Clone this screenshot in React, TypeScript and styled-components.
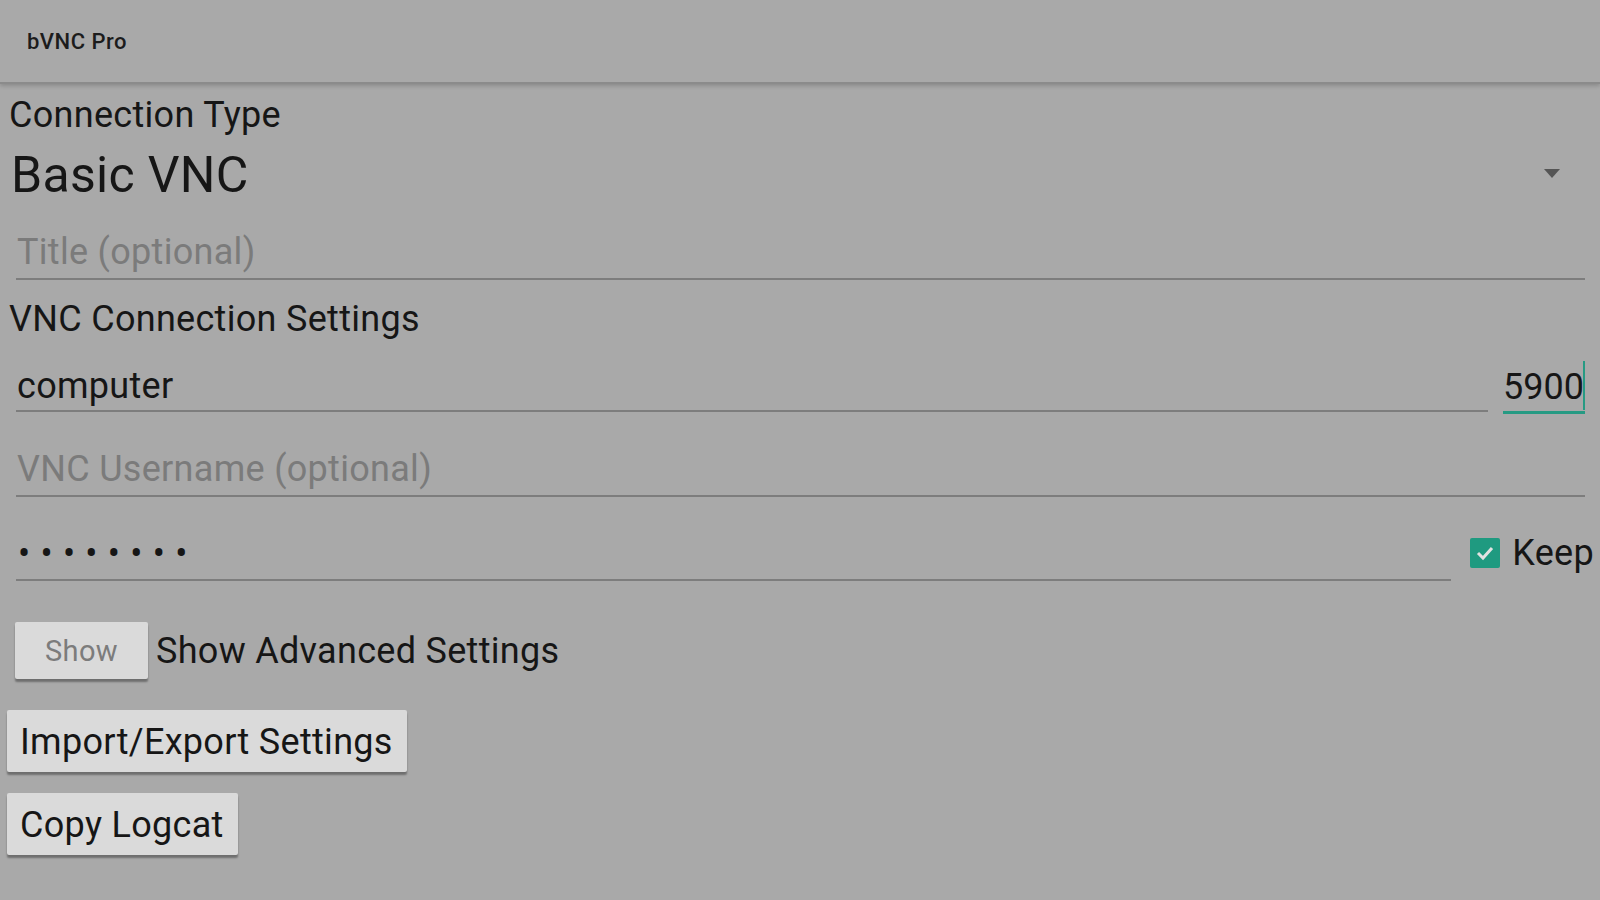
import styled, { createGlobalStyle } from "styled-components";

const GlobalStyle = createGlobalStyle`
  html, body {
    margin: 0;
    padding: 0;
    background: #a9a9a9;
  }
  body {
    font-family: Roboto, "Liberation Sans", sans-serif;
    color: #161616;
  }
`;

export default function App() {
  return (
    <>
      <GlobalStyle />
      <Page>
        <AppBar>
          <AppTitle>bVNC Pro</AppTitle>
        </AppBar>
        <Form>
          <SectionLabel $mt={10}>Connection Type</SectionLabel>
          <Spinner>
            <SpinnerValue>Basic VNC</SpinnerValue>
            <SpinnerArrow width="16" height="9" viewBox="0 0 16 9">
              <polygon points="0,0 16,0 8,9" fill="#555" />
            </SpinnerArrow>
          </Spinner>

          <FieldRow $mt={28}>
            <TextField $hint>Title (optional)</TextField>
          </FieldRow>

          <SectionLabel $mt={18}>VNC Connection Settings</SectionLabel>

          <FieldRow $mt={25}>
            <TextField $pb={3}>computer</TextField>
            <PortField>
              5900
              <Cursor />
            </PortField>
          </FieldRow>

          <FieldRow $mt={36}>
            <TextField $hint>VNC Username (optional)</TextField>
          </FieldRow>

          <FieldRow $mt={35}>
            <PasswordField>••••••••</PasswordField>
            <KeepBox>
              <CheckSquare>
                <svg width="20" height="16" viewBox="0 0 20 16">
                  <polyline
                    points="3,8 8,13 17,3"
                    fill="none"
                    stroke="#e2e2e2"
                    strokeWidth="3"
                  />
                </svg>
              </CheckSquare>
              <KeepLabel>Keep</KeepLabel>
            </KeepBox>
          </FieldRow>

          <AdvancedRow>
            <SmallButton>Show</SmallButton>
            <AdvancedLabel>Show Advanced Settings</AdvancedLabel>
          </AdvancedRow>

          <ActionButton $mt={31}>Import/Export Settings</ActionButton>
          <ActionButton $mt={21}>Copy Logcat</ActionButton>
        </Form>
      </Page>
    </>
  );
}

const Page = styled.div`
  width: 1600px;
  height: 900px;
  overflow: hidden;
  display: flex;
  flex-direction: column;
`;

const AppBar = styled.header`
  height: 82px;
  display: flex;
  align-items: center;
  padding-left: 27px;
  border-bottom: 2px solid #8b8b8b;
  box-shadow: 0 2px 4px rgba(0, 0, 0, 0.18);
`;

const AppTitle = styled.span`
  font-size: 22px;
  font-weight: 500;
  letter-spacing: 0.5px;
  color: #1c1c1c;
`;

const Form = styled.div`
  display: flex;
  flex-direction: column;
  padding: 0 15px 0 9px;
  letter-spacing: 0.3px;
`;

const SectionLabel = styled.div<{ $mt: number }>`
  margin-top: ${({ $mt }) => $mt}px;
  font-size: 36px;
  line-height: 42px;
`;

const Spinner = styled.div`
  margin-top: 11px;
  display: flex;
  align-items: center;
  justify-content: space-between;
  padding-left: 2px;
  padding-right: 25px;
`;

const SpinnerValue = styled.span`
  font-size: 50px;
  line-height: 56px;
`;

const SpinnerArrow = styled.svg`
  margin-top: -4px;
`;

const FieldRow = styled.div<{ $mt: number }>`
  margin-top: ${({ $mt }) => $mt}px;
  margin-left: 7px;
  display: flex;
  align-items: flex-end;
`;

const TextField = styled.div<{ $hint?: boolean; $pb?: number }>`
  flex: 1;
  font-size: 36px;
  line-height: 42px;
  padding-left: 1px;
  padding-bottom: ${({ $pb }) => $pb ?? 5}px;
  color: ${({ $hint }) => ($hint ? "#7b7b7b" : "#161616")};
  border-bottom: 2px solid #7d7d7d;
`;

const PortField = styled.div`
  position: relative;
  width: 82px;
  margin-left: 15px;
  font-size: 36px;
  line-height: 42px;
  padding-bottom: 3px;
  text-align: right;
  padding-right: 3px;
  box-sizing: border-box;
  letter-spacing: 0;
  border-bottom: 3px solid #269a83;
  margin-bottom: -2px;
`;

const Cursor = styled.span`
  position: absolute;
  right: 0;
  top: -5px;
  width: 2px;
  height: 49px;
  background: #269a83;
`;

const PasswordField = styled.div`
  flex: 1;
  font-size: 36px;
  line-height: 40px;
  letter-spacing: 10.3px;
  padding-top: 2px;
  padding-left: 2px;
  padding-bottom: 5px;
  border-bottom: 2px solid #7d7d7d;
`;

const KeepBox = styled.div`
  display: flex;
  align-items: center;
  gap: 12px;
  margin-left: 19px;
  margin-right: -9px;
  align-self: flex-start;
  height: 42px;
`;

const CheckSquare = styled.div`
  width: 30px;
  height: 30px;
  border-radius: 2px;
  background: #1f9a80;
  display: flex;
  align-items: center;
  justify-content: center;
`;

const KeepLabel = styled.span`
  font-size: 36px;
  line-height: 42px;
`;

const AdvancedRow = styled.div`
  margin-top: 41px;
  margin-left: 6px;
  display: flex;
  align-items: center;
  gap: 8px;
`;

const SmallButton = styled.button`
  width: 133px;
  height: 57px;
  border: none;
  border-radius: 2px;
  background: #dadada;
  box-shadow: 0 3px 2px rgba(0, 0, 0, 0.35);
  font-family: Roboto, "Liberation Sans", sans-serif;
  font-size: 29px;
  letter-spacing: 0.4px;
  color: #7c7c7c;
  padding: 0;
`;

const AdvancedLabel = styled.span`
  font-size: 36px;
  line-height: 42px;
`;

const ActionButton = styled.button<{ $mt: number }>`
  align-self: flex-start;
  margin-top: ${({ $mt }) => $mt}px;
  margin-left: -2px;
  height: 62px;
  padding: 2px 14px 0 13px;
  border: none;
  border-radius: 2px;
  background: #dadada;
  box-shadow: 0 3px 2px rgba(0, 0, 0, 0.35);
  font-family: Roboto, "Liberation Sans", sans-serif;
  font-size: 36px;
  letter-spacing: 0.3px;
  color: #161616;
`;
